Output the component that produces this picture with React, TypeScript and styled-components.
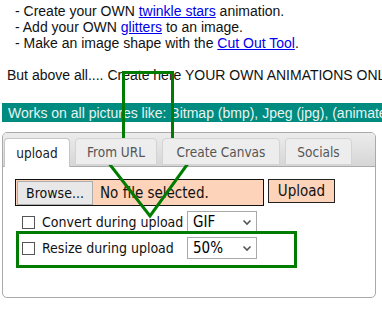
import React from 'react'
import styled, { createGlobalStyle } from 'styled-components'

const GlobalStyle = createGlobalStyle`
  html, body { margin: 0; padding: 0; background: #fff; }
  body { font-family: Arial, "Liberation Sans", sans-serif; color: #111; }
`

const Page = styled.div`
  position: relative;
  width: 382px;
  height: 316px;
  overflow: hidden;
  padding: 3px 0 0 2px;
  box-sizing: border-box;
`

const List = styled.div`
  padding-left: 13px;
  font-size: 14px;
  line-height: 16px;
`

const Line = styled.div`
  white-space: nowrap;
`

const Anchor = styled.a`
  color: #0000ee;
  text-decoration: underline;
`

const Intro = styled.div`
  margin: 16px 0 0 5px;
  font-size: 14px;
  line-height: 16px;
  white-space: nowrap;
`

const Banner = styled.div`
  margin-top: 20px;
  height: 19px;
  background: #008b80;
  color: #e6f4f2;
  font-size: 14px;
  line-height: 20px;
  padding-left: 6px;
  white-space: nowrap;
  overflow: hidden;
`

const Tabs = styled.div`
  margin-top: 10px;
  width: 372px;
  height: 164px;
  border: 1px solid #aaa;
  border-radius: 5px;
  overflow: hidden;
  font-family: "DejaVu Sans Condensed", "DejaVu Sans", Verdana, sans-serif;
  font-stretch: condensed;
`

const TabNav = styled.div`
  display: flex;
  gap: 5px;
  padding: 5px 0 0 1px;
  height: 28px;
  background: linear-gradient(#ececec, #d6d6d6);
  border-bottom: 1px solid #aaa;
`

const Tab = styled.div<{ active?: boolean; w: number }>`
  width: ${(p) => p.w}px;
  height: ${(p) => (p.active ? '29px' : '27px')};
  display: flex;
  align-items: center;
  justify-content: center;
  box-sizing: border-box;
  font-size: 13.5px;
  white-space: nowrap;
  color: ${(p) => (p.active ? '#212121' : '#555')};
  background: ${(p) => (p.active ? '#fff' : '#ededed')};
  border: 1px solid ${(p) => (p.active ? '#c5c5c5' : '#d3d3d3')};
  border-bottom: ${(p) => (p.active ? 'none' : '1px solid #d3d3d3')};
  border-radius: 4px 4px 0 0;
  position: relative;
  z-index: 1;
`

const Body = styled.div`
  padding: 12px 0 0 12px;
  display: flex;
  flex-direction: column;
`

const UploadRow = styled.div`
  display: flex;
  align-items: flex-start;
  gap: 4px;
`

const FileBox = styled.div`
  width: 249px;
  height: 27px;
  box-sizing: border-box;
  border: 1px solid #111;
  background: #fdd3b9;
  display: flex;
  align-items: center;
  padding-left: 1px;
  gap: 7px;
  font-size: 15px;
  white-space: nowrap;
`

const BrowseButton = styled.div`
  width: 76px;
  height: 24px;
  box-sizing: border-box;
  background: #e8e8e8;
  border: 1px solid #adadad;
  display: flex;
  align-items: center;
  justify-content: center;
  font-size: 14px;
`

const UploadButton = styled.div`
  height: 24px;
  width: 67px;
  box-sizing: border-box;
  border: 1px solid #222;
  background: #fdd3b9;
  display: flex;
  align-items: center;
  justify-content: center;
  font-size: 15px;
`

const OptionRow = styled.div<{ first?: boolean }>`
  display: flex;
  align-items: center;
  height: 26px;
  margin-top: ${(p) => (p.first ? '3px' : '0')};
  padding-left: 7px;
  font-size: 14px;
  white-space: nowrap;
`

const Check = styled.span`
  width: 13px;
  height: 13px;
  box-sizing: border-box;
  border: 1px solid #555;
  background: #fff;
  margin-right: 7px;
`

const Label = styled.span`
  width: 145px;
`

const Select = styled.div`
  width: 70px;
  height: 22px;
  box-sizing: border-box;
  border: 1px solid #a9a9a9;
  display: flex;
  align-items: center;
  justify-content: space-between;
  padding: 0 4px 0 5px;
  font-size: 15px;
  color: #000;
`

const Overlay = styled.svg`
  position: absolute;
  left: 0;
  top: 0;
  pointer-events: none;
`

const Chevron = () => (
  <svg width="10" height="7" viewBox="0 0 10 7">
    <path d="M1.5 1.5 L5 5 L8.5 1.5" fill="none" stroke="#555" strokeWidth="1.6" />
  </svg>
)

export default function App() {
  return (
    <Page>
      <GlobalStyle />
      <List>
        <Line>
          - Create your OWN <Anchor href="#">twinkle stars</Anchor> animation.
        </Line>
        <Line>
          - Add your OWN <Anchor href="#">glitters</Anchor> to an image.
        </Line>
        <Line>
          - Make an image shape with the <Anchor href="#">Cut Out Tool</Anchor>.
        </Line>
      </List>
      <Intro>But above all.... Create here YOUR OWN ANIMATIONS ONLINE!</Intro>
      <Banner>Works on all pictures like: Bitmap (bmp), Jpeg (jpg), (animated) Gif</Banner>
      <Tabs>
        <TabNav>
          <Tab active w={66}>upload</Tab>
          <Tab w={82}>From URL</Tab>
          <Tab w={118}>Create Canvas</Tab>
          <Tab w={67}>Socials</Tab>
        </TabNav>
        <Body>
          <UploadRow>
            <FileBox>
              <BrowseButton>Browse...</BrowseButton>
              No file selected.
            </FileBox>
            <UploadButton>Upload</UploadButton>
          </UploadRow>
          <OptionRow first>
            <Check />
            <Label>Convert during upload</Label>
            <Select>
              GIF <Chevron />
            </Select>
          </OptionRow>
          <OptionRow>
            <Check />
            <Label>Resize during upload</Label>
            <Select>
              50% <Chevron />
            </Select>
          </OptionRow>
        </Body>
      </Tabs>
      <Overlay width="382" height="316" viewBox="0 0 382 316">
        <path
          d="M123.5 72.5 L172.5 72.5 L172.5 145.5 L201 145.5 L150 216 L95 145.5 L123.5 145.5 Z"
          fill="none"
          stroke="#007c00"
          strokeWidth="3"
        />
        <rect x="17.5" y="232.5" width="278" height="34" fill="none" stroke="#007c00" strokeWidth="3" />
      </Overlay>
    </Page>
  )
}
